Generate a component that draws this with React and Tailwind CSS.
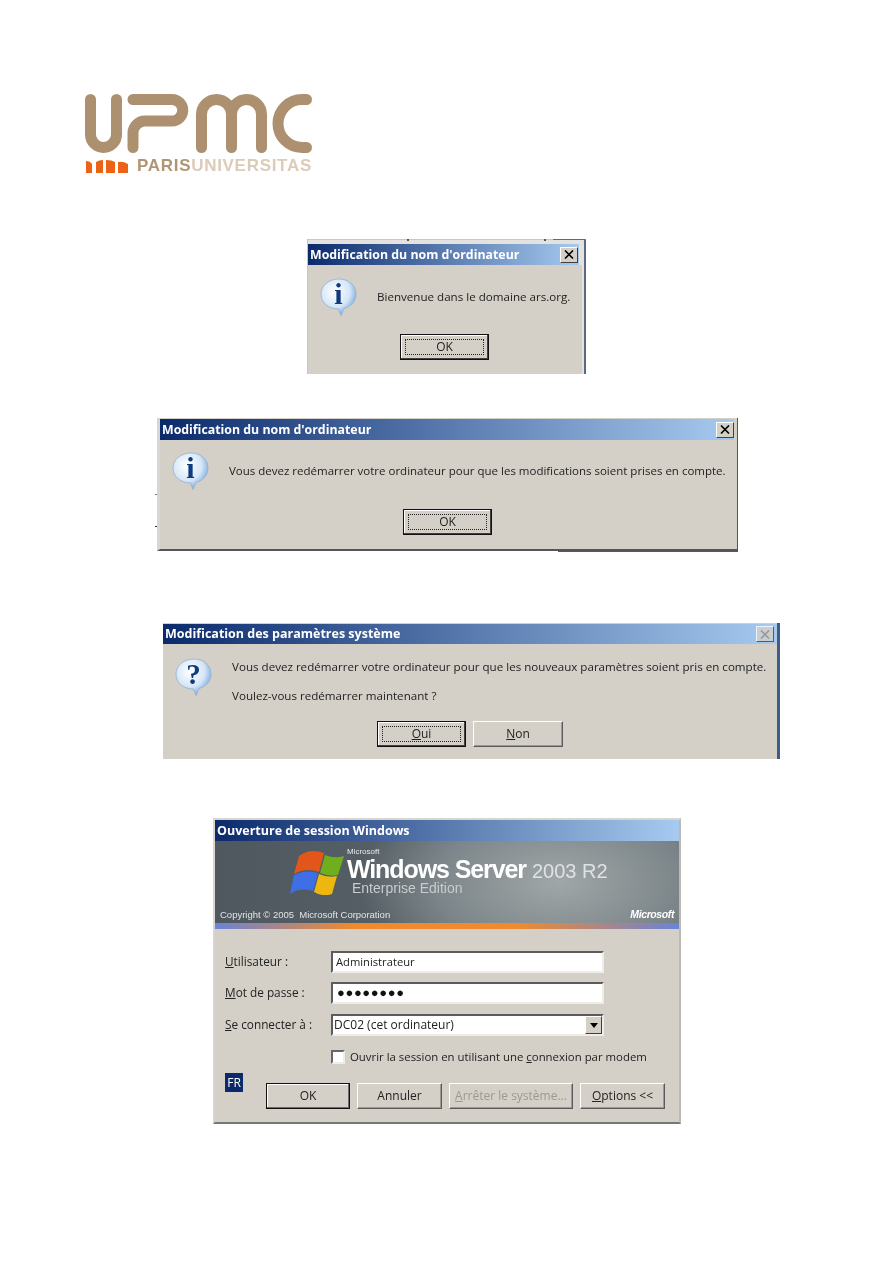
import { useId } from 'react'

const UI_FONT = 'font-["Open_Sans","Noto_Sans",sans-serif]'

function UpmcLogo() {
  return (
    <div className="flex flex-col w-[228px]">
      <svg width="228" height="60" viewBox="85 94 228 60" fill="none" stroke="#ad9070" strokeWidth="11" strokeLinecap="round">
        <path d="M90.5 99.5V134.5a13 13 0 0 0 26 0V99.5" />
        <path d="M133 99.5H172a10.75 10.75 0 0 1 0 21.5H145a12 12 0 0 0-12 12V147.5" />
        <path d="M201.5 147.5V114.5a15 15 0 0 1 30 0V147.5M231.5 114.5a15 15 0 0 1 30 0V147.5" />
        <path d="M306.5 99.5H302a24 24 0 0 0 0 48H306.5" />
      </svg>
      <div className="flex items-center mt-[4px] h-[15px]">
        <svg width="44" height="14" viewBox="0 0 44 14" fill="#ec6316">
          <path d="M1 14V2Q5 2 7 5V14Z" />
          <path d="M11 14V3Q14 1 18 1V14Z" />
          <path d="M21 14V1Q27 1 30 3V14Z" />
          <path d="M33 14V3Q38 2 43 5V14Z" />
        </svg>
        <span className='ml-[8px] font-["Liberation_Sans",sans-serif] font-bold text-[17px] leading-[15px] text-[#b09676] tracking-[0.7px]'>PARIS</span>
        <span className='font-["Liberation_Sans",sans-serif] font-bold text-[17px] leading-[15px] text-[#dccbb8] tracking-[0.7px]'>UNIVERSITAS</span>
      </div>
    </div>
  )
}

function CloseButton({ disabled }) {
  return (
    <div className={`w-[18px] h-[16px] flex items-center justify-center bg-[#d4d0c8] border border-t-white border-l-white border-r-[#404040] border-b-[#404040] ${disabled ? 'opacity-80' : ''}`}>
      <svg width="10" height="9" viewBox="0 0 10 9" stroke={disabled ? '#8f8f8a' : '#000'} strokeWidth="1.6">
        <path d="M1 0.5L9 8.5M9 0.5L1 8.5" />
      </svg>
    </div>
  )
}

function TitleBar({ title, children, size = 'text-[12.5px]', className = '' }) {
  return (
    <div className={`flex items-center justify-between bg-[linear-gradient(90deg,#0b2a6c_0%,#a6caf0_100%)] ${className}`}>
      <span className={`${UI_FONT} ${size} font-bold text-white whitespace-nowrap pl-[2px] pt-[1px]`}>{title}</span>
      {children}
    </div>
  )
}

function BubbleIcon({ glyph }) {
  const id = useId()
  return (
    <svg width="38" height="38" viewBox="0 0 38 38" className="shrink-0">
      <defs>
        <radialGradient id={id} cx="0.4" cy="0.35" r="0.7">
          <stop offset="0" stopColor="#ffffff" />
          <stop offset="0.6" stopColor="#d5e6f7" />
          <stop offset="1" stopColor="#6f9fd6" />
        </radialGradient>
      </defs>
      <path d="M19 1C29 1 36 7.500 36 16C36 24 30 29 24 30.500L21 37.500L18.500 31C9 31 1 25 1 16C1 7.500 9 1 19 1Z" fill={`url(#${id})`} stroke="#8fb0d4" strokeWidth="0.8" />
      <text x="18.500" y="26" textAnchor="middle" fontFamily="Liberation Serif, serif" fontWeight="700" fontSize={glyph === '?' ? 29 : 30} fill="#10397f">{glyph}</text>
    </svg>
  )
}

function WinButton({ children, variant = 'plain', className = '' }) {
  if (variant === 'focus') {
    return (
      <div className={`border border-[#111] shadow-[inset_-1px_-1px_0_#404040,inset_1px_1px_0_#fff] bg-[#d4d0c8] p-[4px] ${className}`}>
        <div className={`${UI_FONT} h-full flex items-center justify-center border border-dotted border-[#222] text-[12px] text-[#222]`}>
          {children}
        </div>
      </div>
    )
  }
  if (variant === 'default') {
    return (
      <div className={`${UI_FONT} border border-[#111] shadow-[inset_-1px_-1px_0_#6b6b6b,inset_1px_1px_0_#fff] bg-[#d4d0c8] flex items-center justify-center text-[12px] text-[#222] ${className}`}>
        {children}
      </div>
    )
  }
  return (
    <div className={`${UI_FONT} border border-t-white border-l-white border-r-[#5a5a5a] border-b-[#5a5a5a] shadow-[inset_-1px_-1px_0_#9c9a94] bg-[#d4d0c8] flex items-center justify-center text-[12px] text-[#222] ${className}`}>
      {children}
    </div>
  )
}

function WelcomeDialog() {
  return (
    <div className="relative ml-[307px] mt-[66px] w-[279px] h-[135px] flex flex-col border-t border-l border-[#c9c7c2] bg-[#e4e2de] pt-[4px] pr-[2px] border-r-[#5a6b80] border-r-2">
      {/* bits of the window behind */}
      <div className="absolute left-[99px] top-[-1px] w-[2px] h-[2px] bg-[#555]" />
      <div className="absolute left-[236px] top-[-1px] w-[2px] h-[2px] bg-[#555]" />
      <div className="absolute left-[245px] top-[-1px] w-[32px] h-[1px] bg-[#5a6b80]" />
      <TitleBar title="Modification du nom d'ordinateur" size="text-[12.35px]" className="h-[21px] mr-[3px] pr-[1px]">
        <CloseButton />
      </TitleBar>
      <div className="flex-1 bg-[#d4d0c8] flex flex-col">
        <div className="flex items-center pl-[12px] mt-[13px]">
          <BubbleIcon glyph="i" />
          <span className={`${UI_FONT} ml-[19px] text-[11.6px] whitespace-nowrap text-[#222]`}>Bienvenue dans le domaine ars.org.</span>
        </div>
        <WinButton variant="focus" className="ml-[92px] mt-[18px] w-[89px] h-[26px]">OK</WinButton>
      </div>
    </div>
  )
}

function RestartDialog() {
  return (
    <div className="flex flex-col">
      <div className="relative ml-[157px] mt-[44px] w-[581px] h-[133px] flex flex-col bg-[#d4d0c8] border-l-[3px] border-l-[#d8d6d0] border-r border-r-[#555] border-b-2 border-b-[#555] pt-[1px]">
        <div className="absolute left-[-5px] top-[76px] w-[2px] h-[1px] bg-[#777]" />
        <div className="absolute left-[-5px] top-[108px] w-[2px] h-[1px] bg-[#333]" />
        <TitleBar title="Modification du nom d'ordinateur" size="text-[12.35px]" className="h-[21px] mr-[3px]">
          <CloseButton />
        </TitleBar>
        <div className="flex items-center pl-[12px] mt-[12px]">
          <BubbleIcon glyph="i" />
          <span className={`${UI_FONT} ml-[19px] text-[11.5px] whitespace-nowrap text-[#222]`}>Vous devez redémarrer votre ordinateur pour que les modifications soient prises en compte.</span>
        </div>
        <WinButton variant="focus" className="ml-[243px] mt-[19px] w-[89px] h-[26px]">OK</WinButton>
      </div>
      <div className="ml-[558px] w-[180px] h-[1px] bg-[#3d5c86]" />
    </div>
  )
}

function SettingsDialog() {
  return (
    <div className="ml-[163px] mt-[71px] w-[617px] h-[136px] flex flex-col bg-[#d4d0c8] border-r-[3px] border-r-[#3d5c86] pt-[1px]">
      <TitleBar title="Modification des paramètres système" className="h-[20px] pr-[3px]">
        <CloseButton disabled />
      </TitleBar>
      <div className="flex pl-[12px] mt-[14px]">
        <BubbleIcon glyph="?" />
        <div className={`${UI_FONT} ml-[19px] text-[11.6px] text-[#222] whitespace-nowrap flex flex-col gap-[12px] leading-[17px]`}>
          <span>Vous devez redémarrer votre ordinateur pour que les nouveaux paramètres soient pris en compte.</span>
          <span>Voulez-vous redémarrer maintenant ?</span>
        </div>
      </div>
      <div className="flex gap-[7px] ml-[214px] mt-[17px]">
        <WinButton variant="focus" className="w-[89px] h-[26px]"><span><u>O</u>ui</span></WinButton>
        <WinButton className="w-[90px] h-[26px]"><span><u>N</u>on</span></WinButton>
      </div>
    </div>
  )
}

function WindowsFlag() {
  return (
    <svg width="54" height="46" viewBox="0 0 54 46" className="shrink-0">
      <path d="M9 7Q20 -1 34 4L29 23Q16 18 4 25Z" fill="#e2561a" />
      <path d="M35 6Q44 10 54 7L48 26Q40 28 30 24Z" fill="#6fae1c" />
      <path d="M4 26Q15 20 28 24L23 42Q10 38 0 45Z" fill="#3f6fe6" />
      <path d="M29 25Q38 29 47 27L42 45Q32 48 24 43Z" fill="#eeb70f" />
    </svg>
  )
}

function Banner() {
  return (
    <div className="h-[82px] flex flex-col bg-[radial-gradient(ellipse_200px_110px_at_74%_50%,#a0a7a8_0%,#7d868a_60%,transparent_100%),linear-gradient(90deg,#4f585e_0%,#596268_55%,#6f787b_80%,#626c70_100%)]">
      <div className="flex items-start pl-[75px] pt-[8px]">
        <WindowsFlag />
        <div className='ml-[3px] -mt-[1px] font-["Liberation_Sans",sans-serif] text-white'>
          <div className="text-[8px] leading-[8px] text-[#e8eaea]">Microsoft</div>
          <div className="flex items-baseline leading-[20px] mt-[3px] h-[20px]">
            <span className="text-[25px] font-bold tracking-[-1.1px]">Windows Server</span>
            <span className="ml-[6px] text-[20px] text-[#dfe2e2]">2003 R2</span>
          </div>
          <div className="ml-[5px] mt-[1px] text-[14px] leading-[16px] text-[#c8cccd]">Enterprise Edition</div>
        </div>
      </div>
      <div className='mt-auto mb-[3px] flex items-center justify-between px-[5px] font-["Liberation_Sans",sans-serif]'>
        <span className="text-[9.5px] leading-[11px] text-[#e3e5e5]">Copyright © 2005&nbsp; Microsoft Corporation</span>
        <span className="text-[10.5px] leading-[11px] font-bold italic tracking-[-0.4px] text-white">Microsoft</span>
      </div>
    </div>
  )
}

function Field({ label, mnemonic, children, arrow, className = '' }) {
  return (
    <div className={`flex items-center ${className}`}>
      <label className={`${UI_FONT} w-[106px] text-[11.8px] text-[#222]`}><u>{mnemonic}</u>{label}</label>
      <div className={`${UI_FONT} relative w-[273px] h-[22px] bg-white border-2 border-t-[#5c5c5c] border-l-[#5c5c5c] border-r-[#efede8] border-b-[#efede8] flex items-center text-[12px] text-[#222]`}>
        {children}
        {arrow && (
          <div className="absolute right-0 top-0 w-[17px] h-[18px] bg-[#d4d0c8] border border-t-white border-l-white border-r-[#404040] border-b-[#404040] flex items-center justify-center">
            <svg width="8" height="5" viewBox="0 0 8 5" fill="#000"><path d="M0 0H8L4 5Z" /></svg>
          </div>
        )}
      </div>
    </div>
  )
}

function LogonDialog() {
  return (
    <div className="ml-[213px] mt-[59px] w-[468px] h-[306px] flex flex-col bg-[#d4d0c8] border-2 border-[#d8d5ce] border-b-[#777] border-r-[#bdbab3]">
      <TitleBar title="Ouverture de session Windows" className="h-[21px]" />
      <Banner />
      <div className="h-[6px] bg-[linear-gradient(90deg,#6b83d8_0%,#f08a2c_30%,#f08a2c_65%,#6b83d8_100%)]" />
      <div className="flex flex-col pl-[10px] pt-[22px]">
        <Field mnemonic="U" label="tilisateur :"><span className="pl-[3px] text-[11.2px]">Administrateur</span></Field>
        <Field mnemonic="M" label="ot de passe :" className="mt-[9px]">
          <span className="pl-[4px] text-[13px] tracking-[0.6px] text-[#111]">●●●●●●●●</span>
        </Field>
        <Field mnemonic="S" label="e connecter à :" className="mt-[10px]" arrow><span className="pl-[1px]">DC02 (cet ordinateur)</span></Field>
        <div className="flex items-center ml-[106px] mt-[12px]">
          <div className="w-[14px] h-[14px] bg-white border-2 border-t-[#666] border-l-[#666] border-r-[#efede8] border-b-[#efede8]" />
          <span className={`${UI_FONT} ml-[5px] text-[11.4px] text-[#222] whitespace-nowrap`}>Ouvrir la session en utilisant une <u>c</u>onnexion par modem</span>
        </div>
        <div className="flex items-start mt-[8px]">
          <div className={`${UI_FONT} w-[18px] h-[19px] bg-[#0a2a6b] text-white text-[12px] leading-[19px] text-center`}>FR</div>
          <div className="flex gap-[7px] ml-[23px] mt-[10px]">
            <WinButton variant="default" className="w-[84px] h-[26px]">OK</WinButton>
            <WinButton className="w-[85px] h-[26px]">Annuler</WinButton>
            <WinButton className="w-[124px] h-[26px] !text-[#9a9893]"><span><u>A</u>rrêter le système...</span></WinButton>
            <WinButton className="w-[85px] h-[26px]"><span><u>O</u>ptions &lt;&lt;</span></WinButton>
          </div>
        </div>
      </div>
    </div>
  )
}

export default function App() {
  return (
    <div className="w-[893px] h-[1263px] bg-white overflow-hidden flex flex-col blur-[0.35px]">
      <div className="ml-[85px] mt-[94px]">
        <UpmcLogo />
      </div>
      <WelcomeDialog />
      <RestartDialog />
      <SettingsDialog />
      <LogonDialog />
    </div>
  )
}
